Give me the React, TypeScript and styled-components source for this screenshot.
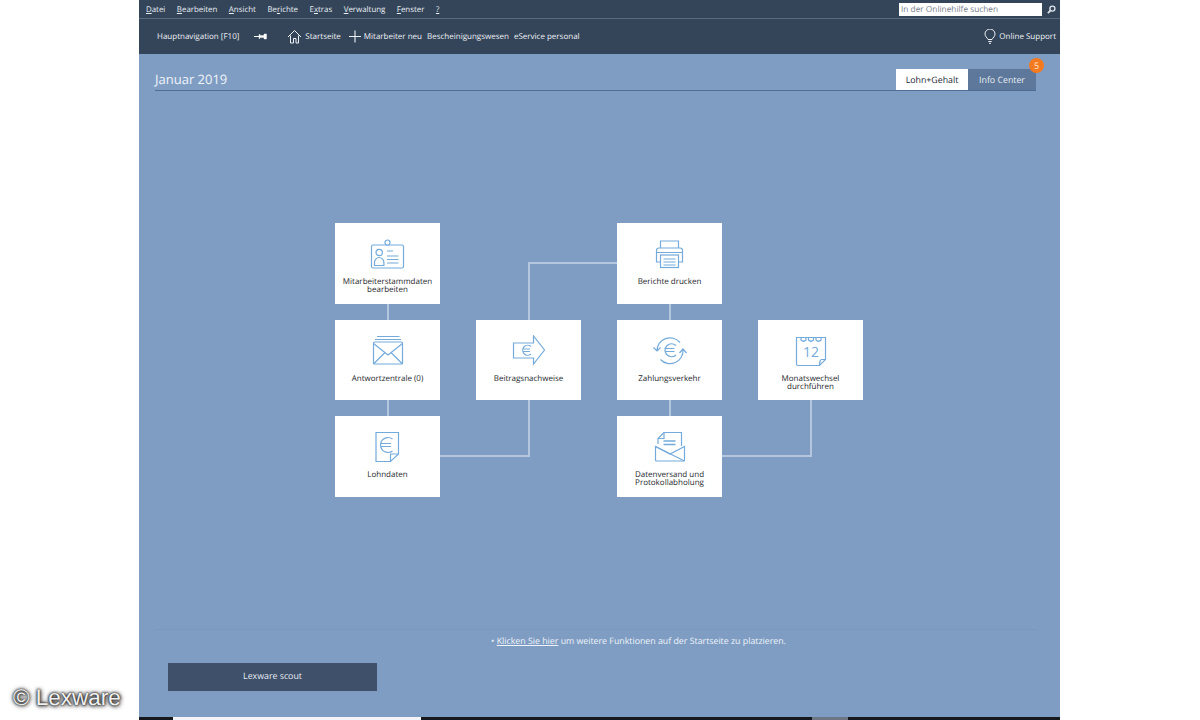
import { ReactNode } from "react";
import styled, { createGlobalStyle } from "styled-components";

const GlobalStyle = createGlobalStyle`
  html, body {
    margin: 0;
    background: #fff;
    font-family: "Open Sans", "Liberation Sans", sans-serif;
    text-rendering: geometricPrecision;
  }
`;

const Page = styled.div`
  position: relative;
  width: 1200px;
  height: 720px;
  overflow: hidden;
  padding-left: 139px;
  box-sizing: border-box;
`;

const Win = styled.div`
  width: 921px;
  height: 720px;
  display: flex;
  flex-direction: column;
  background: #7f9dc3;
`;

const MenuBar = styled.div`
  height: 18px;
  flex: none;
  display: flex;
  align-items: center;
  padding: 0 4px 0 7px;
  background: #34455a;
  border-bottom: 1px solid #5a6b80;
`;

const MenuItems = styled.div`
  display: flex;
  gap: 11.5px;
  flex: 1;
  padding-top: 1px;
`;

const MenuItem = styled.span`
  font-size: 7.9px;
  color: #e8edf2;
  & u {
    text-underline-offset: 1px;
  }
`;

const SearchBox = styled.div`
  width: 143px;
  height: 13px;
  box-sizing: border-box;
  padding-left: 2px;
  background: #fff;
  color: #77808c;
  font-size: 8.3px;
  line-height: 14px;
`;

const SearchIcon = styled.svg`
  width: 9px;
  height: 9px;
  margin-left: 5px;
`;

const NavBar = styled.div`
  height: 35px;
  flex: none;
  display: flex;
  align-items: center;
  padding: 0 4px 0 18px;
  background: #34455a;
`;

const NavText = styled.span<{ $gap?: number }>`
  font-size: 8px;
  color: #eef1f5;
  white-space: nowrap;
  margin-left: ${(p) => p.$gap ?? 0}px;
`;

const NavIcon = styled.svg<{ $gap?: number; $w: number }>`
  width: ${(p) => p.$w}px;
  height: 15px;
  flex: none;
  margin-left: ${(p) => p.$gap ?? 0}px;
`;

const NavSpacer = styled.div`
  flex: 1;
`;

const Content = styled.div`
  flex: 1;
  display: flex;
  flex-direction: column;
  min-height: 0;
`;

const HeadRow = styled.div`
  height: 36px;
  margin: 0 24px 0 16px;
  flex: none;
  display: flex;
  align-items: flex-end;
  justify-content: space-between;
  border-bottom: 1px solid #4f6c92;
`;

const MonthTitle = styled.h1`
  margin: 0 0 2px;
  font-size: 13px;
  font-weight: 400;
  line-height: 18px;
  color: #eef3f9;
`;

const Tabs = styled.div`
  display: flex;
`;

const Tab = styled.div<{ $active?: boolean }>`
  position: relative;
  height: 21px;
  line-height: 22px;
  width: ${(p) => (p.$active ? 72 : 68)}px;
  text-align: center;
  font-size: 8.8px;
  background: ${(p) => (p.$active ? "#fff" : "#5d789b")};
  color: ${(p) => (p.$active ? "#1a2636" : "#e9eef4")};
`;

const Badge = styled.span`
  position: absolute;
  top: -11px;
  right: -8px;
  width: 15px;
  height: 15px;
  border-radius: 50%;
  background: #f47a20;
  color: #ffe6cf;
  font-size: 9px;
  line-height: 15px;
  text-align: center;
`;

const Diagram = styled.div`
  position: relative;
  align-self: flex-start;
  margin: 132px 0 0 196px;
  display: grid;
  grid-template-columns: repeat(4, 105px);
  grid-template-rows: 81px 80px 81px;
  column-gap: 36px;
  row-gap: 16px;
`;

const Connectors = styled.svg`
  position: absolute;
  left: 0;
  top: 0;
  width: 528px;
  height: 274px;
`;

const Card = styled.div<{ $col: number; $row: number }>`
  position: relative;
  grid-column: ${(p) => p.$col};
  grid-row: ${(p) => p.$row};
  display: flex;
  flex-direction: column;
  align-items: center;
  padding-top: 15px;
  box-sizing: border-box;
  background: #fff;
`;

const CardIcon = styled.svg`
  width: 36px;
  height: 32px;
  flex: none;
  fill: none;
  stroke: #74abdb;
  stroke-width: 1.2;
`;

const CardLabel = styled.div`
  margin-top: 7.5px;
  font-size: 8px;
  line-height: 8.5px;
  color: #26282c;
  text-align: center;
  white-space: pre-line;
`;

const Footer = styled.div`
  margin-top: auto;
  flex: none;
  display: flex;
  flex-direction: column;
`;

const Hint = styled.div`
  text-align: center;
  font-size: 8.8px;
  color: #eef3f9;
  padding: 5px 0 0 86px;
  border-top: 1px solid #7a98be;
  margin: 0 24px 0 16px;
  & u {
    text-underline-offset: 1px;
  }
`;

const ScoutButton = styled.div`
  width: 209px;
  height: 28px;
  margin: 16px 0 26px 29px;
  background: #3e506a;
  color: #e8edf3;
  font-size: 8.8px;
  line-height: 27px;
  text-align: center;
`;

const BottomStrip = styled.div`
  height: 3px;
  flex: none;
  display: flex;
  padding-left: 34px;
  background: #15181c;
`;

const StripTab = styled.div<{ $w: number; $gap?: number; $bg: string }>`
  width: ${(p) => p.$w}px;
  margin-left: ${(p) => p.$gap ?? 0}px;
  background: ${(p) => p.$bg};
`;

const Watermark = styled.div`
  position: absolute;
  left: 13px;
  top: 686px;
  font-family: "Liberation Sans", Arial, sans-serif;
  font-size: 22.5px;
  line-height: 24px;
  color: #f0f0f0;
  text-shadow: 0 0 2px #222, 0 0 3px #333, 1px 1px 4px #444, 0 0 5px #666;
`;

const menu: ReactNode[] = [
  <><u>D</u>atei</>,
  <><u>B</u>earbeiten</>,
  <><u>A</u>nsicht</>,
  <>Be<u>r</u>ichte</>,
  <>E<u>x</u>tras</>,
  <><u>V</u>erwaltung</>,
  <><u>F</u>enster</>,
  <><u>?</u></>,
];

const IdIcon = () => (
  <CardIcon viewBox="0 0 36 32">
    <rect x="1.5" y="7" width="32" height="23" rx="1.5" />
    <circle cx="17.5" cy="4.5" r="2.5" fill="#fff" />
    <circle cx="9.2" cy="14.5" r="3.2" />
    <path d="M4.500 27.500v-3c0-3 2.500-5 4.700-5s4.700 2 4.700 5v3z" />
    <path d="M17 13h6M17 18h11.500M17 21.500h11.500M17 25h11.500" />
  </CardIcon>
);

const MailIcon = () => (
  <CardIcon viewBox="0 0 36 32">
    <path d="M7 1.500h22.500M5 4.500h26" />
    <rect x="3.500" y="7" width="29" height="22" rx="1" />
    <path d="M3.500 8.500l14.500 11.500L32.500 8.500M3.500 29l11.500-11.500M32.500 29L21 17.500" />
  </CardIcon>
);

const EuroArrowIcon = () => (
  <CardIcon viewBox="0 0 36 32">
    <path d="M2.500 8H22.500V1L33.500 15 22.500 29V23H2.500z" />
    <path d="M20 11.500a5 5 0 1 0 0 7.500M12 14h7M12 16.500h7" />
  </CardIcon>
);

const DocEuroIcon = () => (
  <CardIcon viewBox="0 0 36 32">
    <path d="M6 1.500h22.500v21.500L20.500 30.500H6z" />
    <path d="M20.500 30.500v-7.500h8" />
    <path d="M22.500 8a7.500 7.500 0 1 0 0 12M11 12.500h10M11 15.500h10" />
  </CardIcon>
);

const PrinterIcon = () => (
  <CardIcon viewBox="0 0 36 32">
    <path d="M8.500 10V3h18v7" />
    <path d="M8.500 24H4.500V12.500q0-2.500 2.500-2.500h21q2.500 0 2.500 2.500V24H26.500" />
    <rect x="8.500" y="17" width="18" height="12.500" />
    <path d="M11.500 21h12M11.500 24h12M11.500 27h12M4.500 14.500h26" />
  </CardIcon>
);

const ExchangeIcon = () => (
  <CardIcon viewBox="0 0 36 32">
    <path d="M1.500 12.500l3.500 3.500 3.500-3.500M5 16a13 13 0 0 1 23-8.500" />
    <path d="M27.500 18l3.500-4 3.500 4M31 14.500a13 13 0 0 1-22.500 10" />
    <path d="M24 10.500a6.500 6.500 0 1 0 0 9.500M12.500 13.500h10M12.500 16.500h10" />
  </CardIcon>
);

const CalendarIcon = () => (
  <CardIcon viewBox="0 0 36 32">
    <path d="M3.500 2.500h29v22L26.500 30.500H5q-1.500 0-1.500-1.500z" />
    <path d="M26.500 30.500c0-3 1-6 2-6h4" />
    <path d="M8 3v2q2.500 2.500 5 0V3M15.500 3v2q2.500 2.500 5 0V3M23 3v2q2.500 2.500 5 0V3" />
    <text x="18" y="21.500" fontSize="14" textAnchor="middle" fill="#74abdb" stroke="none" fontFamily="Open Sans, sans-serif">12</text>
  </CardIcon>
);

const LetterIcon = () => (
  <CardIcon viewBox="0 0 36 32">
    <path d="M6 13V7.500L12 1.500h17.500V15" />
    <path d="M12 1.500V7.500H6" />
    <path d="M11.500 10h12M11.500 13.500h12" strokeWidth="1.500" />
    <path d="M3.500 15.500v13.500q0 1 1 1h27q1 0 1-1V15.500L18 23z" fill="#fff" />
    <path d="M3.500 15.500l29 14.500" />
  </CardIcon>
);

const cards: { col: number; row: number; label: string; icon: ReactNode }[] = [
  { col: 1, row: 1, label: "Mitarbeiterstammdaten\nbearbeiten", icon: <IdIcon /> },
  { col: 1, row: 2, label: "Antwortzentrale (0)", icon: <MailIcon /> },
  { col: 1, row: 3, label: "Lohndaten", icon: <DocEuroIcon /> },
  { col: 2, row: 2, label: "Beitragsnachweise", icon: <EuroArrowIcon /> },
  { col: 3, row: 1, label: "Berichte drucken", icon: <PrinterIcon /> },
  { col: 3, row: 2, label: "Zahlungsverkehr", icon: <ExchangeIcon /> },
  { col: 3, row: 3, label: "Datenversand und\nProtokollabholung", icon: <LetterIcon /> },
  { col: 4, row: 2, label: "Monatswechsel\ndurchführen", icon: <CalendarIcon /> },
];

export default function App() {
  return (
    <Page>
      <GlobalStyle />
      <Win>
        <MenuBar>
          <MenuItems>
            {menu.map((m, i) => (
              <MenuItem key={i}>{m}</MenuItem>
            ))}
          </MenuItems>
          <SearchBox>In der Onlinehilfe suchen</SearchBox>
          <SearchIcon viewBox="0 0 10 10" fill="none" stroke="#dfe5ec" strokeWidth="1.500">
            <circle cx="6" cy="4" r="2.800" />
            <path d="M4 6L1 9" strokeWidth="2" />
          </SearchIcon>
        </MenuBar>
        <NavBar>
          <NavText>Hauptnavigation [F10]</NavText>
          <NavIcon $w={13} $gap={15} viewBox="0 0 13 15" fill="#fff" stroke="#fff">
            <path d="M0 7.500h5" strokeWidth="1" />
            <path d="M5 5.500h1v1h4V5h2.500v5H10V8.500H6v1H5z" strokeWidth=".4" />
          </NavIcon>
          <NavIcon $w={13} $gap={21} viewBox="0 0 13 15" fill="none" stroke="#eef1f5" strokeWidth="1">
            <path d="M0 8L6.500 1.500 13 8M2.500 6.500V14H5.500V9.500H8V14H10.500V6.500" />
          </NavIcon>
          <NavText $gap={4}>Startseite</NavText>
          <NavIcon $w={12} $gap={8} viewBox="0 0 12 15" fill="none" stroke="#eef1f5" strokeWidth="1.100">
            <path d="M6 1.500v12M0 7.500h12" />
          </NavIcon>
          <NavText $gap={3}>Mitarbeiter neu</NavText>
          <NavText $gap={5}>Bescheinigungswesen</NavText>
          <NavText $gap={5}>eService personal</NavText>
          <NavSpacer />
          <NavIcon $w={12} viewBox="0 0 12 15" fill="none" stroke="#eef1f5" strokeWidth="1">
            <path d="M4 10.500C3 8.500 1 7.500 1 5a5 5 0 0 1 10 0c0 2.500-2 3.500-3 5.500zM4.300 12.500h3.400M5 14.300h2" />
          </NavIcon>
          <NavText $gap={3}>Online Support</NavText>
        </NavBar>
        <Content>
          <HeadRow>
            <MonthTitle>Januar 2019</MonthTitle>
            <Tabs>
              <Tab $active>Lohn+Gehalt</Tab>
              <Tab>
                Info Center
                <Badge>5</Badge>
              </Tab>
            </Tabs>
          </HeadRow>
          <Diagram>
            <Connectors viewBox="0 0 528 274" fill="none" stroke="#b4c6dd" strokeWidth="2">
              <path d="M53 60V240M105 233H194V40H300M335 60V240M387 233H476V150" />
            </Connectors>
            {cards.map((c) => (
              <Card key={c.label} $col={c.col} $row={c.row}>
                {c.icon}
                <CardLabel>{c.label}</CardLabel>
              </Card>
            ))}
          </Diagram>
          <Footer>
            <Hint>
              • <u>Klicken Sie hier</u> um weitere Funktionen auf der Startseite zu platzieren.
            </Hint>
            <ScoutButton>Lexware scout</ScoutButton>
          </Footer>
        </Content>
        <BottomStrip>
          <StripTab $w={248} $bg="#f2f4f7" />
          <StripTab $w={36} $gap={391} $bg="#6d7684" />
        </BottomStrip>
      </Win>
      <Watermark>© Lexware</Watermark>
    </Page>
  );
}
